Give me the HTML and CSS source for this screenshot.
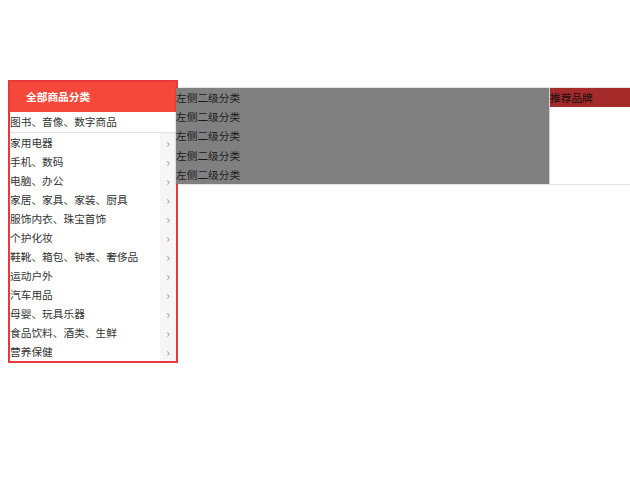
FILE: index.html
```html
<!DOCTYPE html>
<html lang="zh-CN">
<head>
<meta charset="utf-8">
<title>全部商品分类</title>
<link rel="stylesheet" href="styles.css">
</head>
<body>
<div class="page">
  <div class="nav">
    <div class="nav-head">全部商品分类</div>
    <ul class="cat-list">
      <li class="cat active"><span class="cat-name">图书、音像、数字商品</span></li>
      <li class="cat"><span class="cat-name">家用电器</span><span class="arrow">›</span></li>
      <li class="cat"><span class="cat-name">手机、数码</span><span class="arrow">›</span></li>
      <li class="cat"><span class="cat-name">电脑、办公</span><span class="arrow">›</span></li>
      <li class="cat"><span class="cat-name">家居、家具、家装、厨具</span><span class="arrow">›</span></li>
      <li class="cat"><span class="cat-name">服饰内衣、珠宝首饰</span><span class="arrow">›</span></li>
      <li class="cat"><span class="cat-name">个护化妆</span><span class="arrow">›</span></li>
      <li class="cat"><span class="cat-name">鞋靴、箱包、钟表、奢侈品</span><span class="arrow">›</span></li>
      <li class="cat"><span class="cat-name">运动户外</span><span class="arrow">›</span></li>
      <li class="cat"><span class="cat-name">汽车用品</span><span class="arrow">›</span></li>
      <li class="cat"><span class="cat-name">母婴、玩具乐器</span><span class="arrow">›</span></li>
      <li class="cat"><span class="cat-name">食品饮料、酒类、生鲜</span><span class="arrow">›</span></li>
      <li class="cat"><span class="cat-name">营养保健</span><span class="arrow">›</span></li>
    </ul>
    <div class="popup">
      <ul class="sub-list">
        <li>左侧二级分类</li>
        <li>左侧二级分类</li>
        <li>左侧二级分类</li>
        <li>左侧二级分类</li>
        <li>左侧二级分类</li>
      </ul>
      <div class="brands">
        <div class="brands-head">推荐品牌</div>
      </div>
    </div>
  </div>
</div>
</body>
</html>
```
FILE: styles.css
```css
html, body {
  margin: 0;
  padding: 0;
  overflow: hidden;
  background: #fff;
}
body {
  font-family: "Noto Sans CJK SC", "Noto Sans", sans-serif;
  font-size: 10.7px;
  color: #333;
}
ul {
  list-style: none;
  margin: 0;
  padding: 0;
}
.page {
  padding: 80px 0 0 8px;
}
.nav {
  position: relative;
  width: 166px;
  border: 2px solid #e8393c;
}
.nav-head {
  height: 30px;
  line-height: 30px;
  padding-left: 16px;
  background: #f6483a;
  color: #fff;
  font-weight: bold;
}
.cat-list {
  display: flex;
  flex-direction: column;
}
.cat {
  display: flex;
  height: 19px;
  line-height: 19px;
  background: #fff;
}
.cat.active {
  height: 20px;
  line-height: 20px;
  margin-bottom: 1px;
  box-shadow: 0 1px 1px rgba(0, 0, 0, 0.12);
  position: relative;
}
.cat-name {
  flex: 1;
  white-space: nowrap;
}
.arrow {
  width: 16px;
  text-align: center;
  background: #f6f6f6;
  color: #999;
  font-size: 12px;
}
.popup {
  position: absolute;
  left: 166px;
  top: 6px;
  width: 480px;
  height: 96px;
  display: flex;
  box-shadow: 0 0 2px rgba(0, 0, 0, 0.3);
  z-index: 2;
}
.sub-list {
  width: 373px;
  background: #808080;
  color: #1a1a1a;
}
.sub-list li {
  height: 19.2px;
  line-height: 19.2px;
}
.brands {
  flex: 1;
  background: #fff;
  border-left: 1px solid #d0d0d0;
}
.brands-head {
  height: 19px;
  line-height: 19px;
  background: #a52a2a;
  color: #111;
}
```
